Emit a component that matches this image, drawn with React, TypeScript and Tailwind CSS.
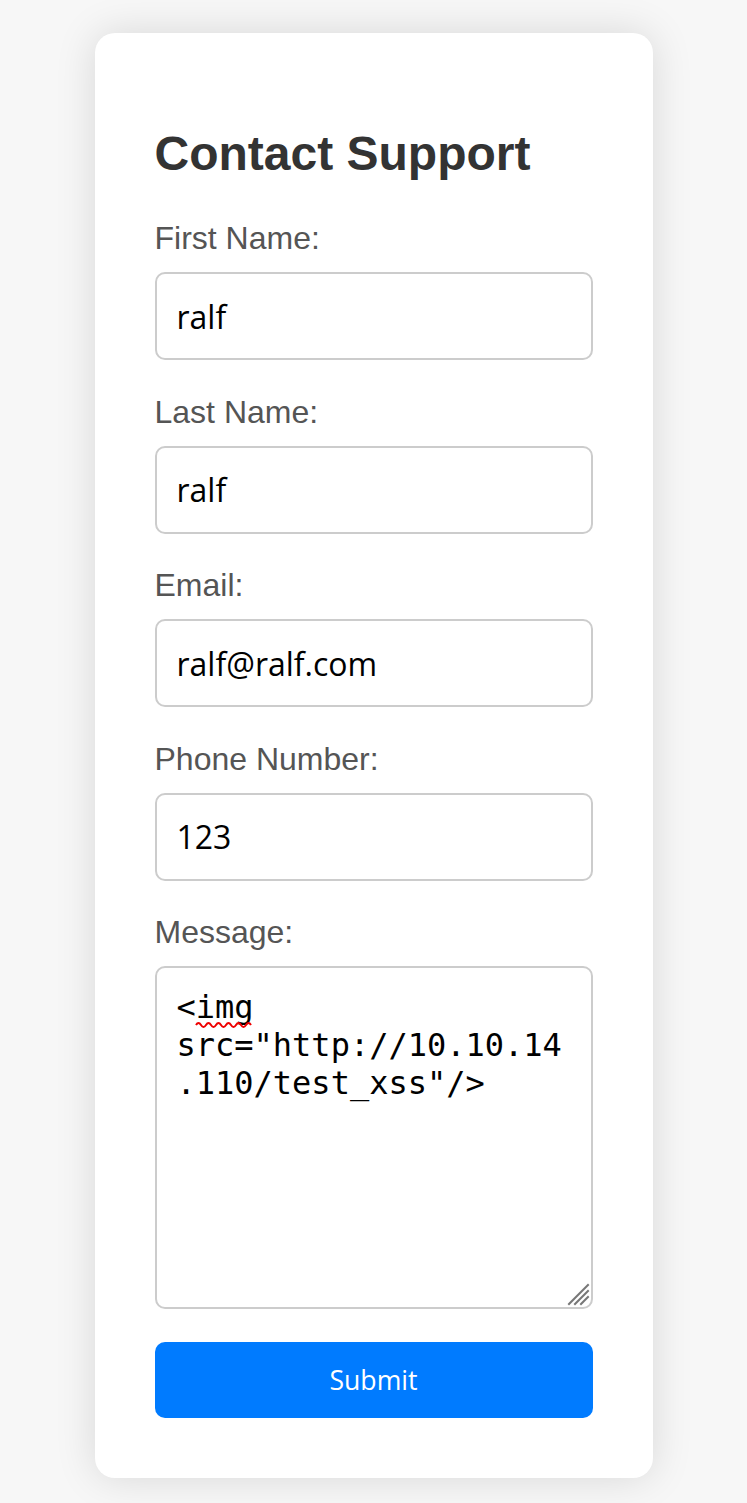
const fields = [
  { label: "First Name:", value: "ralf" },
  { label: "Last Name:", value: "ralf" },
  { label: "Email:", value: "ralf@ralf.com" },
  { label: "Phone Number:", value: "123" },
];

const message = '<img src="http://10.10.14.110/test_xss"/>';

export default function App() {
  return (
    <div className="min-h-screen bg-[#f7f7f7] pt-[33px] pb-[25px]">
      <div className="mx-auto w-[558px] rounded-[20px] bg-white px-[60px] pt-[60px] pb-[60px] shadow-[0_0_40px_rgba(0,0,0,0.13)]">
        <h2 className="mt-[33px] mb-[39px] font-['Liberation_Sans',Arial,sans-serif] text-[48px] leading-[55px] font-bold text-[#333]">
          Contact Support
        </h2>

        <form onSubmit={(e) => e.preventDefault()}>
          {fields.map((f) => (
            <div key={f.label} className="mb-[33.5px]">
              <label className="mb-[15px] block font-['Liberation_Sans',Arial,sans-serif] text-[32px] leading-[37px] text-[#555]">
                {f.label}
              </label>
              <input
                type="text"
                defaultValue={f.value}
                className="block h-[88px] w-full rounded-[10px] border-2 border-[#ccc] bg-white px-[20px] font-['Open_Sans',sans-serif] text-[32px] text-black outline-none"
              />
            </div>
          ))}

          <div className="mb-[33px]">
            <label className="mb-[15px] block font-['Liberation_Sans',Arial,sans-serif] text-[32px] leading-[37px] text-[#555]">
              Message:
            </label>
            <div className="relative">
              <textarea
                defaultValue={message}
                spellCheck={false}
                className="block h-[343px] w-full resize-none rounded-[10px] border-2 border-[#ccc] bg-white p-[20px] font-['DejaVu_Sans_Mono',monospace] text-[32px] leading-[normal] text-black outline-none"
              />
              {/* spellcheck squiggle under "img" */}
              <svg
                className="pointer-events-none absolute left-[40px] top-[54px]"
                width="60"
                height="8"
                viewBox="0 0 60 8"
              >
                <path
                  d="M1 5 Q3.5 1 6 5 T11 5 T16 5 T21 5 T26 5 T31 5 T36 5 T41 5 T46 5 T51 5 T56 5"
                  fill="none"
                  stroke="#e00"
                  strokeWidth="2"
                />
              </svg>
              {/* resize grip */}
              <svg
                className="pointer-events-none absolute right-[3px] bottom-[3px]"
                width="24"
                height="24"
                viewBox="0 0 24 24"
              >
                <g stroke="#777" strokeWidth="2" strokeLinecap="square">
                  <line x1="3" y1="22" x2="22" y2="3" />
                  <line x1="9" y1="22" x2="22" y2="9" />
                  <line x1="15" y1="22" x2="22" y2="15" />
                </g>
              </svg>
            </div>
          </div>

          <button
            type="submit"
            className="block h-[76px] w-full rounded-[10px] bg-[#007bff] font-['Open_Sans',sans-serif] text-[26.67px] text-white"
          >
            Submit
          </button>
        </form>
      </div>
    </div>
  );
}
